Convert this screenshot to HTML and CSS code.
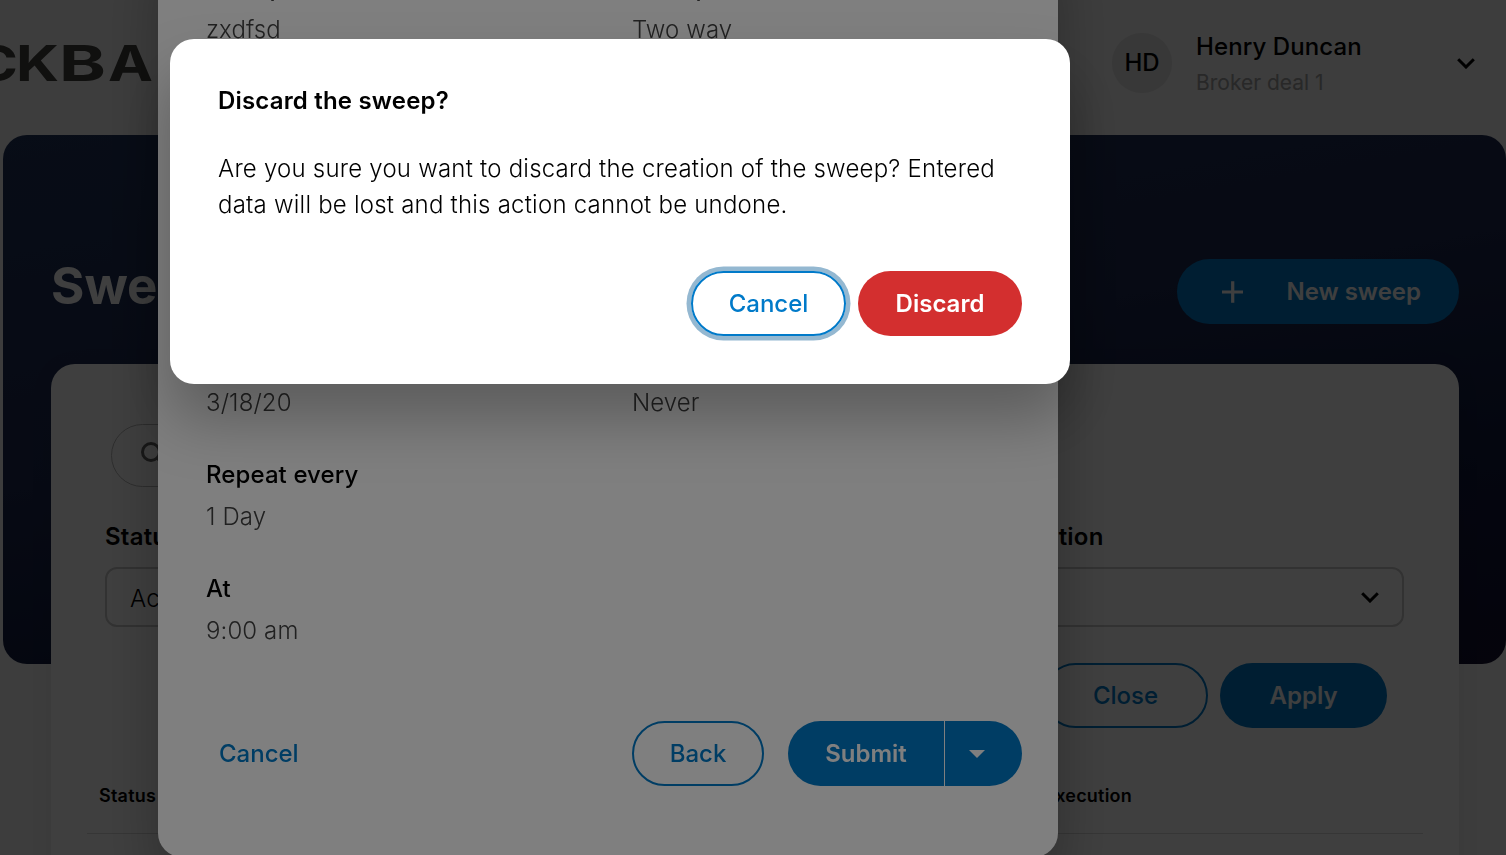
FILE: index.html
```html
<!DOCTYPE html>
<html lang="en">
<head>
<meta charset="utf-8">
<title>Sweeps</title>
<link rel="stylesheet" href="styles.css">
</head>
<body>
<div class="page">
  <header class="topbar">
    <svg class="logo" width="158" height="60" viewBox="0 0 158 60">
      <text class="logo-text" x="-26" y="48" textLength="44" lengthAdjust="spacingAndGlyphs">C</text>
      <text class="logo-text" x="16" y="48" textLength="43" lengthAdjust="spacingAndGlyphs">K</text>
      <text class="logo-text" x="59" y="48" textLength="47" lengthAdjust="spacingAndGlyphs">B</text>
      <text class="logo-text" x="108" y="48" textLength="45" lengthAdjust="spacingAndGlyphs">A</text>
    </svg>
    <div class="account">
      <div class="avatar">HD</div>
      <div class="account-info">
        <div class="account-name">Henry Duncan</div>
        <div class="account-role">Broker deal 1</div>
      </div>
      <svg class="chevron" width="18" height="11" viewBox="0 0 18 11"><path d="M1.200 1.200 9 9l7.800-7.800"/></svg>
    </div>
  </header>

  <section class="hero">
    <h1 class="hero-title">Sweeps</h1>
    <button class="btn btn-new">
      <svg width="22" height="22" viewBox="0 0 22 22"><path d="M11 0v22M0 11h22" stroke="#fff" stroke-width="3.300"/></svg>
      <span>New sweep</span>
    </button>
  </section>

  <main class="card">
    <div class="search">
      <svg width="30" height="30" viewBox="0 0 30 30"><circle cx="11" cy="10" r="8.500"/><path d="m17 16 9 9"/></svg>
    </div>
    <div class="filters">
      <div class="field"><div class="field-label">Status</div><div class="select"><span>Active</span></div></div>
      <div class="field"><div class="field-label">Type</div><div class="select"><span>All</span></div></div>
      <div class="field"><div class="field-label">Execution</div>
        <div class="select"><svg class="chevron" width="18" height="11" viewBox="0 0 18 11"><path d="M1.200 1.200 9 9l7.800-7.800"/></svg></div>
      </div>
    </div>
    <div class="filter-actions">
      <button class="btn btn-outline">Close</button>
      <button class="btn btn-primary">Apply</button>
    </div>
    <div class="table-head"><span>Status</span><span>Next execution</span></div>
  </main>
</div>

<div class="overlay overlay-sheet">
  <div class="sheet">
    <dl class="details details-top">
      <div><dt>Sweep name</dt><dd>zxdfsd</dd></div>
      <div><dt>Sweep direction</dt><dd>Two way</dd></div>
    </dl>
    <dl class="details">
      <div><dt>Starts</dt><dd>3/18/20</dd></div>
      <div><dt>Ends</dt><dd>Never</dd></div>
      <div class="full"><dt>Repeat every</dt><dd>1 Day</dd></div>
      <div class="full"><dt>At</dt><dd>9:00 am</dd></div>
    </dl>
    <div class="sheet-actions">
      <button class="btn btn-text">Cancel</button>
      <button class="btn btn-outline">Back</button>
      <div class="split">
        <button class="btn btn-primary split-main">Submit</button>
        <button class="btn btn-primary split-more"><svg width="16" height="8" viewBox="0 0 16 8"><path d="M0 0h16L8 8z" fill="#fff"/></svg></button>
      </div>
    </div>
  </div>
</div>

<div class="overlay overlay-dialog">
  <div class="dialog" role="dialog">
    <h2 class="dialog-title">Discard the sweep?</h2>
    <p class="dialog-text">Are you sure you want to discard the creation of the sweep? Entered data will be lost and this action cannot be undone.</p>
    <div class="dialog-actions">
      <button class="btn btn-outline focused">Cancel</button>
      <button class="btn btn-danger">Discard</button>
    </div>
  </div>
</div>
</body>
</html>
```
FILE: styles.css
```css
* { box-sizing: border-box; }
body {
  margin: 0;
  height: 855px;
  overflow: hidden;
  font: 300 24px/36px Inter, "Liberation Sans", sans-serif;
  letter-spacing: 0.22px;
  color: #000;
}
h1, h2, p, dl, dd { margin: 0; }
.page { height: 855px; overflow: hidden; background: #f4f4f4; }

/* Top bar */
.topbar { height: 135px; display: flex; justify-content: space-between; padding: 33px 31px 0 0; }
.logo { display: block; }
.logo-text { font: 700 49.500px Inter, sans-serif; letter-spacing: 0; fill: #40403c; }
.account { display: flex; width: 363px; height: 60px; align-items: center; }
.avatar { width: 60px; height: 60px; border-radius: 50%; background: #e0e0e0; font-weight: 500; line-height: 60px; text-align: center; letter-spacing: 0; }
.account-info { margin-left: 24px; flex: 1; }
.account-name { font-weight: 500; margin-top: 3px; letter-spacing: 0.1px; }
.account-role { font-size: 21px; font-weight: 400; color: #a0a0a0; letter-spacing: 0; }
.chevron path { fill: none; stroke: #000; stroke-width: 3; }

/* Hero */
.hero {
  height: 529px; margin-left: 3px; padding: 124px 47px 0 48px;
  border-radius: 24px;
  background: linear-gradient(170deg, #20345c, #1c2850 45%, #10183c 75%, #141030);
  display: flex; justify-content: space-between; align-items: flex-start;
}
.hero-title { font-size: 51px; line-height: 54px; font-weight: 700; color: #fff; letter-spacing: 0; }

/* Buttons */
.btn {
  height: 65px; border: 2px solid transparent; border-radius: 33px; padding: 0 36px;
  font: 600 24px/36px Inter, "Liberation Sans", sans-serif; letter-spacing: 0; color: #fff;
  display: inline-flex; align-items: center; justify-content: center; white-space: nowrap;
}
.btn-new { width: 282px; background: #007ac9; gap: 43px; padding: 0 36px 0 43px; }
.btn-primary { background: #007ac9; }
.btn-outline { background: transparent; border-color: #007ac9; color: #007ac9; font-weight: 550; }
.btn-text { background: transparent; color: #007ac9; font-weight: 550; }
.btn-danger { background: #d32f2f; width: 164px; }
.focused { box-shadow: 0 0 0 4.500px #94b8d1; width: 155px; }

/* Content card */
.card {
  position: relative;
  height: 560px; margin: -300px 47px 0 51px; padding: 60px 36px 0;
  border-radius: 24px; background: #fff;
  box-shadow: 0 3px 24px rgba(0, 0, 0, .06);
}
.search { width: 600px; height: 63px; margin: 0 24px; border: 1.500px solid #b8b8b8; border-radius: 32px; padding: 17px 0 0 28px; }
.search svg { display: block; fill: none; stroke: #606060; stroke-width: 3; }
.filters { margin: 32px 19px 0 18px; display: grid; grid-template-columns: repeat(3, 1fr); gap: 24px; }
.field-label { font-weight: 600; }
.select { height: 60px; margin-top: 12px; border: 2px solid #c8c8c8; border-radius: 12px; padding: 0 23px; display: flex; align-items: center; }
.select span { padding-top: 3px; }
.select .chevron { margin-left: auto; }
.filter-actions { margin: 36px 36px 0 0; display: flex; justify-content: flex-end; gap: 12px; }
.filter-actions .btn-outline { width: 165px; }
.filter-actions .btn-primary { width: 167px; }
.table-head {
  margin-top: 50px; height: 56px; border-bottom: 1px solid #d8d8d8; padding: 0 291px 0 12px;
  display: flex; justify-content: space-between; font-size: 18px; font-weight: 600;
}

/* Layers */
.overlay { position: fixed; inset: 0; background: rgba(0, 0, 0, .5); display: flex; align-items: flex-start; }
.overlay-sheet { align-items: flex-end; padding-left: 158px; }
.overlay-dialog { padding: 39px 0 0 170px; }
.sheet, .dialog {
  width: 900px; background: #fff; border-radius: 24px;
  box-shadow: 0 36px 60px rgba(0, 0, 0, .27);
}
.sheet { margin-bottom: -2px; padding: 48px 36px 71px 48px; flex: none; }

.details { display: grid; grid-template-columns: 426px 1fr; row-gap: 36px; }
.details-top { margin-bottom: 295px; }
.details dt { font-weight: 500; letter-spacing: 0.1px; }
.details dd { margin-top: 6px; color: #424242; letter-spacing: 0.1px; }
.full { grid-column: 1 / -1; }
.sheet-actions { margin-top: 72px; display: flex; align-items: center; }
.sheet-actions .btn-text { margin-left: -25px; margin-right: auto; }
.sheet-actions .btn-outline { width: 132px; margin-right: 24px; }
.split { display: flex; gap: 1px; }
.split-main { width: 156px; border-radius: 33px 0 0 33px; }
.split-more { width: 77px; border-radius: 0 33px 33px 0; padding: 0 13px 0 0; }

.dialog { height: 345px; padding: 44px 48px; }
.dialog-title { font-size: 24px; line-height: 36px; font-weight: 600; letter-spacing: 0.18px; }
.dialog-text { margin-top: 32px; }
.dialog-actions { margin-top: 48px; display: flex; justify-content: flex-end; gap: 12px; }
```
